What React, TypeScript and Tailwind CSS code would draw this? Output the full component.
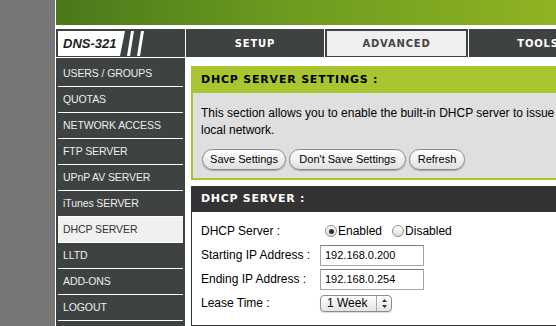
import React from 'react';

const menu = [
  'USERS / GROUPS',
  'QUOTAS',
  'NETWORK ACCESS',
  'FTP SERVER',
  'UPnP AV SERVER',
  'iTunes SERVER',
  'DHCP SERVER',
  'LLTD',
  'ADD-ONS',
  'LOGOUT',
];

function Radio({ checked }: { checked?: boolean }) {
  return (
    <span className="ml-[5px] mr-[1px] inline-flex h-[12px] w-[12px] items-center justify-center rounded-full border border-[#8e8e8e] bg-[linear-gradient(#ffffff,#dcdcdc)]">
      {checked && <span className="h-[5px] w-[5px] rounded-full bg-[#2d2d2d]" />}
    </span>
  );
}

function MacButton({ label, width }: { label: string; width: string }) {
  return (
    <button
      className={`${width} h-[21px] rounded-full border border-[#8a8a8a] bg-[linear-gradient(#ffffff,#f0f0f0_50%,#dedede)] text-[11px] text-black shadow-[0_1px_1px_rgba(0,0,0,0.25)]`}
    >
      {label}
    </button>
  );
}

function Field({ value }: { value: string }) {
  return (
    <input
      readOnly
      value={value}
      className="h-[21px] w-[104px] border border-[#a3a3a3] border-t-[#7c7c7c] bg-white px-[4px] text-[11px] text-black outline-none"
    />
  );
}

export default function App() {
  return (
    <div className="flex h-[326px] w-[556px] overflow-hidden bg-white font-['Liberation_Sans',Arial,sans-serif]">
      <div className="w-[55px] shrink-0 bg-[#777777]" />
      <div className="w-px shrink-0 bg-white" />
      <div className="flex min-w-0 flex-1 flex-col">
        {/* banner */}
        <div className="h-[25px] shrink-0 bg-[linear-gradient(90deg,#4a781a,#6c9a1f_45%,#8fb423)]" />
        <div className="h-[4px] shrink-0" />

        {/* top nav */}
        <div className="flex h-[28px] shrink-0 gap-px">
          <div className="flex w-[129px] shrink-0 bg-[#3e4240] pl-[2px] pt-[2px] pb-px">
            <div className="flex h-[25px] w-[67px] items-center bg-white pl-[5px] [clip-path:polygon(0_0,100%_0,calc(100%-5px)_100%,0_100%)]">
              <span className="text-[13px] font-bold italic text-[#222]">DNS-321</span>
            </div>
            <svg width="26" height="25" viewBox="0 0 26 25" className="shrink-0">
              <polygon points="6,0 9,0 5,25 2,25" fill="#ffffff" />
              <polygon points="16,0 19,0 15,25 12,25" fill="#ffffff" />
            </svg>
          </div>
          <div className="flex w-[138px] shrink-0 items-center justify-center bg-[#3e4240] font-['DejaVu_Sans',Verdana,sans-serif] text-[10px] font-bold tracking-[0.8px] text-white">
            SETUP
          </div>
          <div className="w-[143px] shrink-0 bg-[#3e4240] p-[2px] pb-px">
            <div className="flex h-full items-center justify-center bg-[#efefef] font-['DejaVu_Sans',Verdana,sans-serif] text-[10px] font-bold tracking-[0.8px] text-[#444]">
              ADVANCED
            </div>
          </div>
          <div className="flex w-[138px] shrink-0 items-center justify-center bg-[#3e4240] font-['DejaVu_Sans',Verdana,sans-serif] text-[10px] font-bold tracking-[0.8px] text-white">
            TOOLS
          </div>
        </div>
        <div className="h-px shrink-0" />

        <div className="flex flex-1">
          {/* sidebar */}
          <div className="w-[129px] shrink-0 bg-[#3e4240] px-[2px] pt-[3px]">
            {menu.map((m) => (
              <div
                key={m}
                className={`flex h-[26px] items-center border-b border-white pl-[5px] pt-px text-[10.5px] tracking-[-0.1px] ${
                  m === 'DHCP SERVER' ? 'bg-[#f0f0f0] text-[#333]' : 'text-[#eeeeee]'
                }`}
              >
                {m}
              </div>
            ))}
          </div>

          {/* content */}
          <div className="min-w-0 flex-1 pl-[6px] pt-[8px]">
            <div className="w-[420px] border-2 border-[#a9c52f]">
              <div className="flex h-[25px] items-center bg-[#a9c52f] pl-[8px] font-['DejaVu_Sans',Verdana,sans-serif] text-[11px] font-bold tracking-[0.8px] text-black">
                DHCP SERVER SETTINGS :
              </div>
              <div className="bg-[#dfdfdf] pl-[8px] pt-[12px] pb-[8px]">
                <p className="whitespace-nowrap text-[12px] leading-[17px] text-black">
                  This section allows you to enable the built-in DHCP server to issue IP addresses to your
                  <br />
                  local network.
                </p>
                <div className="mt-[10px] ml-px flex gap-[3px]">
                  <MacButton label="Save Settings" width="w-[84px]" />
                  <MacButton label="Don't Save Settings" width="w-[117px]" />
                  <MacButton label="Refresh" width="w-[56px]" />
                </div>
              </div>
            </div>

            <div className="mt-[6px] w-[420px] border border-[#333333]">
              <div className="flex h-[25px] items-center bg-[#333333] pl-[9px] font-['DejaVu_Sans',Verdana,sans-serif] text-[11px] font-bold tracking-[0.7px] text-white">
                DHCP SERVER :
              </div>
              <div className="bg-white pl-[9px] pt-[7px] pb-[10px] text-[12px] text-black">
                <div className="flex h-[24px] items-center">
                  <span className="w-[119px] shrink-0">DHCP Server :</span>
                  <Radio checked />
                  <span>Enabled</span>
                  <span className="ml-[5px]" />
                  <Radio />
                  <span>Disabled</span>
                </div>
                <div className="flex h-[24px] items-center">
                  <span className="w-[119px] shrink-0">Starting IP Address :</span>
                  <Field value="192.168.0.200" />
                </div>
                <div className="flex h-[24px] items-center">
                  <span className="w-[119px] shrink-0">Ending IP Address :</span>
                  <Field value="192.168.0.254" />
                </div>
                <div className="flex h-[24px] items-center">
                  <span className="w-[119px] shrink-0">Lease Time :</span>
                  <div className="flex h-[17px] w-[72px] overflow-hidden rounded-[4px] border border-[#8c8c8c] bg-[linear-gradient(#ffffff,#e4e4e4)] shadow-[0_1px_1px_rgba(0,0,0,0.15)]">
                    <span className="flex flex-1 items-center pl-[6px] text-[12px]">1 Week</span>
                    <span className="flex w-[15px] items-center justify-center border-l border-[#a8a8a8]">
                      <svg width="7" height="11" viewBox="0 0 7 11">
                        <polygon points="3.5,1 6,4 1,4" fill="#333" />
                        <polygon points="1,7 6,7 3.5,10" fill="#333" />
                      </svg>
                    </span>
                  </div>
                </div>
              </div>
            </div>
          </div>
        </div>
      </div>
    </div>
  );
}
